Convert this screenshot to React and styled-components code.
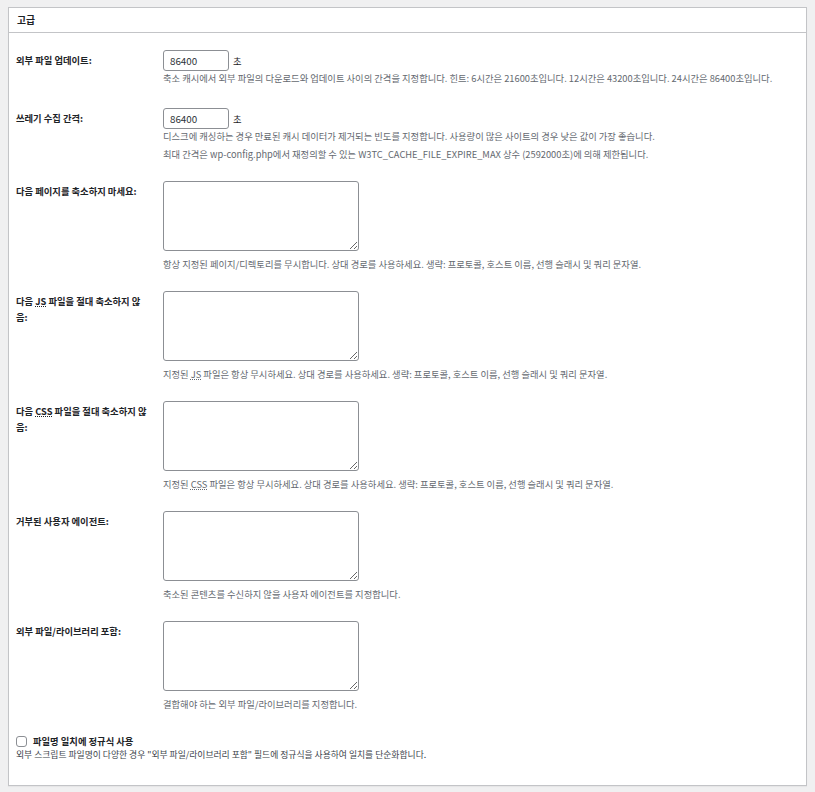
import styled, { createGlobalStyle } from "styled-components";

const GlobalStyle = createGlobalStyle`
  html, body {
    margin: 0;
    padding: 0;
    background: #f0f0f1;
  }
  body {
    padding: 7px 8px 6px 8px;
    font-family: "Noto Sans CJK KR", "Noto Sans", sans-serif;
    color: #1d2327;
  }
`;

const Postbox = styled.div`
  background: #fff;
  border: 1px solid #c3c4c7;
  box-shadow: 0 1px 1px rgba(0, 0, 0, 0.04);
`;

const BoxHeader = styled.h2`
  margin: 0;
  height: 24px;
  line-height: 24px;
  padding: 0 8px;
  font-size: 9.8px;
  font-weight: 700;
  border-bottom: 1px solid #c3c4c7;
`;

const Inside = styled.div`
  padding: 0 7px 23px 7px;
`;

const Row = styled.div`
  display: flex;
  padding: ${(p) => p.$top ?? 10}px 0 ${(p) => p.$bottom ?? 10}px 0;
`;

const Label = styled.div`
  width: 133px;
  flex: 0 0 133px;
  margin-right: 14px;
  padding-top: 2px;
  font-size: 9.3px;
  font-weight: 700;
  line-height: 16px;
  color: #1d2327;
`;

const Field = styled.div`
  flex: 1;
  min-width: 0;
`;

const InputLine = styled.div`
  display: flex;
  align-items: center;
  height: 21px;
`;

const NumberInput = styled.input`
  box-sizing: border-box;
  width: 66px;
  height: 21px;
  padding: 0 6px;
  border: 1px solid #8c8f94;
  border-radius: 3px;
  background: #fff;
  font-family: "Noto Sans CJK KR", "Noto Sans", sans-serif;
  font-size: 9.8px;
  color: #2c3338;
  outline: none;
`;

const Unit = styled.span`
  margin-left: 4px;
  font-size: 9.3px;
  color: #1d2327;
`;

const TextArea = styled.textarea`
  display: block;
  box-sizing: border-box;
  width: 196px;
  height: 70px;
  margin: 0;
  border: 1px solid #8c8f94;
  border-radius: 3px;
  background: #fff;
  outline: none;
`;

const Desc = styled.p`
  margin: ${(p) => p.$gap ?? 0}px 0 0 0;
  font-size: 9.3px;
  line-height: 14px;
  color: #646970;
  white-space: nowrap;
`;

const Abbr = styled.abbr`
  text-decoration: underline dotted;
`;

const CheckSection = styled.div`
  padding-top: 13px;
`;

const CheckLabel = styled.label`
  display: flex;
  align-items: center;
  height: 14px;
  font-size: 9.3px;
  font-weight: 700;
  color: #1d2327;
`;

const CheckBox = styled.input`
  appearance: none;
  box-sizing: border-box;
  width: 11px;
  height: 11px;
  margin: 0 6px 0 0;
  border: 1px solid #8c8f94;
  border-radius: 3px;
  background: #fff;
`;

const CheckDesc = styled.p`
  margin: 0;
  font-size: 8.8px;
  line-height: 14px;
  color: #3c434a;
`;

const rows = [
  {
    label: "다음 페이지를 축소하지 마세요:",
    desc: "항상 지정된 페이지/디렉토리를 무시합니다. 상대 경로를 사용하세요. 생략: 프로토콜, 호스트 이름, 선행 슬래시 및 쿼리 문자열.",
  },
  {
    label: (
      <>
        다음 <Abbr>JS</Abbr> 파일을 절대 축소하지 않음:
      </>
    ),
    desc: (
      <>
        지정된 <Abbr>JS</Abbr> 파일은 항상 무시하세요. 상대 경로를 사용하세요. 생략: 프로토콜, 호스트 이름, 선행 슬래시 및 쿼리 문자열.
      </>
    ),
  },
  {
    label: (
      <>
        다음 <Abbr>CSS</Abbr> 파일을 절대 축소하지 않음:
      </>
    ),
    desc: (
      <>
        지정된 <Abbr>CSS</Abbr> 파일은 항상 무시하세요. 상대 경로를 사용하세요. 생략: 프로토콜, 호스트 이름, 선행 슬래시 및 쿼리 문자열.
      </>
    ),
  },
  {
    label: "거부된 사용자 에이전트:",
    desc: "축소된 콘텐츠를 수신하지 않을 사용자 에이전트를 지정합니다.",
  },
  {
    label: "외부 파일/라이브러리 포함:",
    desc: "결합해야 하는 외부 파일/라이브러리를 지정합니다.",
  },
];

export default function App() {
  return (
    <>
      <GlobalStyle />
      <Postbox>
        <BoxHeader>고급</BoxHeader>
        <Inside>
          <Row $top={17} $bottom={13}>
            <Label>외부 파일 업데이트:</Label>
            <Field>
              <InputLine>
                <NumberInput defaultValue="86400" />
                <Unit>초</Unit>
              </InputLine>
              <Desc>
                축소 캐시에서 외부 파일의 다운로드와 업데이트 사이의 간격을 지정합니다. 힌트: 6시간은 21600초입니다. 12시간은 43200초입니다. 24시간은 86400초입니다.
              </Desc>
            </Field>
          </Row>

          <Row $top={10} $bottom={10}>
            <Label>쓰레기 수집 간격:</Label>
            <Field>
              <InputLine>
                <NumberInput defaultValue="86400" />
                <Unit>초</Unit>
              </InputLine>
              <Desc>
                디스크에 캐싱하는 경우 만료된 캐시 데이터가 제거되는 빈도를 지정합니다. 사용량이 많은 사이트의 경우 낮은 값이 가장 좋습니다.
              </Desc>
              <Desc $gap={4}>
                최대 간격은 wp-config.php에서 재정의할 수 있는 W3TC_CACHE_FILE_EXPIRE_MAX 상수 (2592000초)에 의해 제한됩니다.
              </Desc>
            </Field>
          </Row>

          {rows.map((row, i) => (
            <Row key={i}>
              <Label>{row.label}</Label>
              <Field>
                <TextArea />
                <Desc $gap={6}>{row.desc}</Desc>
              </Field>
            </Row>
          ))}

          <CheckSection>
            <CheckLabel>
              <CheckBox type="checkbox" />
              파일명 일치에 정규식 사용
            </CheckLabel>
            <CheckDesc>
              외부 스크립트 파일명이 다양한 경우 "외부 파일/라이브러리 포함" 필드에 정규식을 사용하여 일치를 단순화합니다.
            </CheckDesc>
          </CheckSection>
        </Inside>
      </Postbox>
    </>
  );
}
